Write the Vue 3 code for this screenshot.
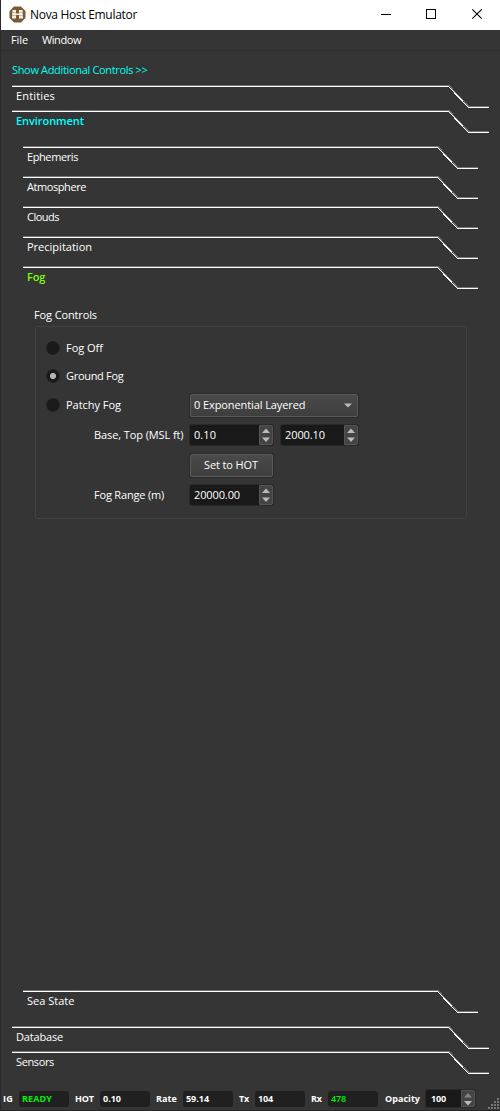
<script setup>
const sections = [
  { name: 'Ephemeris', w: 51 },
  { name: 'Atmosphere', w: 59 },
  { name: 'Clouds', w: 32 },
  { name: 'Precipitation', w: 65 },
  { name: 'Fog', w: 18, active: true },
]
const status = [
  { label: 'IG', w: 10, value: 'READY', vw: 30, on: true },
  { label: 'HOT', w: 19, value: '0.10', vw: 18 },
  { label: 'Rate', w: 21, value: '59.14', vw: 23 },
  { label: 'Tx', w: 10, value: '104', vw: 15 },
  { label: 'Rx', w: 11, value: '478', vw: 15, on: true, thin: true },
]
// Tracks each label so that it takes exactly the given width.
const vFit = {
  mounted(el, { value }) {
    const natural = el.getBoundingClientRect().width
    el.style.letterSpacing = (value - natural) / el.textContent.length + 'px'
  },
}
</script>

<template>
  <div class="window">
    <header class="titlebar">
      <svg class="logo" width="17" height="17" viewBox="0 0 17 17">
        <path d="M5 .5h7l4.500 4.500v7L12 16.500H5L.5 12V5z" fill="#7c5a35" />
        <path d="M3.500 4H7v3.500h3V4h3.500l.5 8.500h-4V9H7v3.500H3z" fill="#f6f1e9" />
        <path d="M3 6.500h4M10 6.500h4M3 9.500h4M10 9.500h4" stroke="#c5ae90" stroke-width=".8" />
      </svg>
      <span class="title"><span v-fit="107">Nova Host Emulator</span></span>
      <svg class="sys" width="120" height="30" viewBox="0 0 120 30" fill="none" stroke="#000">
        <path d="M1 14.500h10M46.500 9.500h9v9h-9z" shape-rendering="crispEdges" />
        <path d="M92.300 9.300l9.400 9.400M101.700 9.300l-9.400 9.400" stroke-width="1.100" />
      </svg>
    </header>
    <nav class="menubar">
      <span class="menu"><span v-fit="17">File</span></span>
      <span><span v-fit="39">Window</span></span>
    </nav>

    <main class="body">
      <div class="more"><span v-fit="135.5">Show Additional Controls &gt;&gt;</span></div>
      <div class="tab outer">
        <svg class="edge" width="477" height="24"><path class="shade" d="M0 .5h437l20 21h20" /><path d="M0 1.500h436.500l20 21h20.500" /></svg>
        <span v-fit="39">Entities</span>
      </div>
      <div class="tab outer cyan">
        <svg class="edge" width="477" height="24"><path class="shade" d="M0 .5h437l20 21h20" /><path d="M0 1.500h436.500l20 21h20.500" /></svg>
        <span v-fit="68">Environment</span>
      </div>

      <section class="environment">
        <div v-for="s in sections" :key="s.name" class="tab inner" :class="{ green: s.active }">
          <svg class="edge" width="455" height="24"><path class="shade" d="M0 .5h415l20 21h20" /><path d="M0 1.500h414.500l20 21h20.500" /></svg>
          <span v-fit="s.w">{{ s.name }}</span>
        </div>
        <div class="fog">
          <div class="caption"><span v-fit="63">Fog Controls</span></div>
          <div class="group">
            <div class="row short"><i class="radio"></i><span v-fit="37">Fog Off</span></div>
            <div class="row short"><i class="radio checked"></i><span v-fit="57.5">Ground Fog</span></div>
            <div class="row">
              <div class="lead"><i class="radio"></i><span v-fit="55">Patchy Fog</span></div>
              <div class="combo">
                <span v-fit="111.5">0 Exponential Layered</span>
                <svg width="8" height="5"><path d="M0 .5h8l-4 4z" fill="#bcbcbc" /></svg>
              </div>
            </div>
            <div class="row">
              <div class="lead indent"><span v-fit="89.500">Base, Top (MSL ft)</span></div>
              <div class="spin">
                <div class="value"><span v-fit="22">0.10</span></div>
                <div class="arrows"><svg width="8" height="14"><path d="M0 5h8L4 .5zM0 9.500h8L4 14z" fill="#bcbcbc" /></svg></div>
              </div>
              <div class="spin second">
                <div class="value"><span v-fit="40">2000.10</span></div>
                <div class="arrows"><svg width="8" height="14"><path d="M0 5h8L4 .5zM0 9.500h8L4 14z" fill="#bcbcbc" /></svg></div>
              </div>
            </div>
            <div class="row">
              <div class="lead"></div>
              <div class="button"><span v-fit="54">Set to HOT</span></div>
            </div>
            <div class="row">
              <div class="lead indent"><span v-fit="70">Fog Range (m)</span></div>
              <div class="spin">
                <div class="value"><span v-fit="46">20000.00</span></div>
                <div class="arrows"><svg width="8" height="14"><path d="M0 5h8L4 .5zM0 9.500h8L4 14z" fill="#bcbcbc" /></svg></div>
              </div>
            </div>
          </div>
        </div>
        <div class="tab inner">
          <svg class="edge" width="455" height="24"><path class="shade" d="M0 .5h415l20 21h20" /><path d="M0 1.500h414.500l20 21h20.500" /></svg>
          <span v-fit="47.5">Sea State</span>
        </div>
      </section>

      <div class="tab outer">
        <svg class="edge" width="477" height="24"><path class="shade" d="M0 .5h437l20 21h20" /><path d="M0 1.500h436.500l20 21h20.500" /></svg>
        <span v-fit="47">Database</span>
      </div>
      <div class="tab outer">
        <svg class="edge" width="477" height="24"><path class="shade" d="M0 .5h437l20 21h20" /><path d="M0 1.500h436.500l20 21h20.500" /></svg>
        <span v-fit="38">Sensors</span>
      </div>
    </main>

    <footer class="statusbar">
      <div v-for="s in status" :key="s.label" class="stat">
        <span class="name"><span v-fit="s.w">{{ s.label }}</span></span>
        <span class="cell" :class="{ on: s.on, thin: s.thin }"><span v-fit="s.vw">{{ s.value }}</span></span>
      </div>
      <span class="opacity"><span v-fit="35">Opacity</span></span>
      <div class="spin small">
        <div class="value"><span v-fit="15">100</span></div>
        <div class="arrows"><svg width="8" height="14"><path d="M0 5.500h8L4 1z" fill="#858585" /><path d="M0 9h8l-4 4.500z" fill="#bcbcbc" /></svg></div>
      </div>
      <svg class="grip" width="12" height="12" fill="#777">
        <path d="M9 0h2v2H9zM6 3h2v2H6zM9 3h2v2H9zM3 6h2v2H3zM6 6h2v2H6zM9 6h2v2H9zM0 9h2v2H0zM3 9h2v2H3zM6 9h2v2H6zM9 9h2v2H9z" />
      </svg>
    </footer>
  </div>
</template>

<style>
body { margin: 0; background: #353535; }
</style>

<style scoped>
.window {
  box-sizing: border-box;
  width: 500px;
  height: 1111px;
  display: flex;
  flex-direction: column;
  overflow: hidden;
  background: #353535;
  color: #fff;
  border-left: 1px solid #2a2a2a;
  border-bottom: 1px solid #252525;
  font: 11px/14px "Open Sans", "Noto Sans", sans-serif;
  white-space: nowrap;
}
.window svg { display: block; flex: none; }
.titlebar {
  height: 30px;
  flex: none;
  display: flex;
  align-items: center;
  background: #fff;
  color: #000;
}
.logo { margin: 0 0 2px 8px; }
.title { margin-left: 4px; font-size: 12px; }
.sys { margin-left: auto; }
.menubar {
  box-sizing: border-box;
  height: 21px;
  flex: none;
  padding: 3px 0 0 10px;
  display: flex;
  gap: 14px;
  border-bottom: 1px solid #2d2d2d;
}
.menu { width: 17px; }
.body { height: 1036px; flex: none; display: flex; flex-direction: column; }
.more { height: 22px; padding: 12px 0 0 11px; color: #00fff0; }
.tab { position: relative; box-sizing: border-box; padding: 4px 0 0 4px; }
.outer { height: 25px; margin-left: 11px; }
.inner { height: 30px; margin-left: 22px; }
.edge {
  position: absolute;
  left: 0;
  top: 0;
  fill: none;
  stroke: #fff;
  shape-rendering: crispEdges;
}
.edge .shade { stroke: #737373; }
.cyan { color: #00ffff; font-weight: 600; }
.green { color: #7dff00; font-weight: 600; }
.environment { height: 880px; padding-top: 11px; flex: none; }
.fog { height: 694px; box-sizing: border-box; padding: 12px 0 0 34px; }
.caption { height: 18px; margin-left: -1px; }
.group {
  box-sizing: border-box;
  width: 432px;
  height: 193px;
  padding: 7px 0 0 10px;
  border: 1px solid #414141;
  border-radius: 2px;
}
.row { height: 30px; display: flex; align-items: center; }
.short { height: 28px; }
.lead { width: 144px; display: flex; align-items: center; }
.indent { box-sizing: border-box; padding-left: 48px; }
.radio {
  box-sizing: border-box;
  width: 14px;
  height: 14px;
  margin-right: 6px;
  flex: none;
  border-radius: 50%;
  background: #1a1a1a;
  border: 1px solid #232323;
}
.checked { background: radial-gradient(circle, #b4b4b4 2.700px, #1a1a1a 3.500px); }
.combo, .button {
  box-sizing: border-box;
  height: 23px;
  display: flex;
  align-items: center;
  background: linear-gradient(#4a4a4a, #3e3e3e);
  border: 1px solid #5a5a5a;
  border-radius: 2px;
  box-shadow: 0 0 0 1px #292929;
}
.combo { width: 168px; padding: 0 5px 0 3px; justify-content: space-between; }
.button { width: 83px; padding-right: 1px; justify-content: center; }
.spin {
  box-sizing: border-box;
  width: 83px;
  height: 20px;
  display: flex;
  background: #191919;
  border-radius: 2px;
  box-shadow: 0 0 0 1px #292929;
}
.second { width: 77px; margin-left: 8px; }
.value { flex: 1; display: flex; align-items: center; padding-left: 4px; }
.arrows {
  box-sizing: border-box;
  width: 14px;
  display: flex;
  align-items: center;
  justify-content: center;
  background: #444;
  border: 1px solid #555;
  border-radius: 0 2px 2px 0;
}
.statusbar {
  height: 23px;
  flex: none;
  display: flex;
  align-items: center;
  padding-left: 2px;
  font: bold 9px/12px "Open Sans", "Noto Sans", sans-serif;
}
.stat { display: flex; align-items: center; margin-right: 6px; }
.name { margin-right: 6px; }
.cell {
  box-sizing: border-box;
  width: 50px;
  height: 16px;
  padding: 2px 0 0 3px;
  background: #202020;
  border-radius: 3px;
}
.on { color: #00f000; }
.thin { font-weight: 600; }
.opacity { margin: 0 6px 0 1px; }
.small { width: 49px; height: 17px; }
.small .value { padding-left: 5px; }
.grip { margin: 10px 0 0 auto; }
</style>
